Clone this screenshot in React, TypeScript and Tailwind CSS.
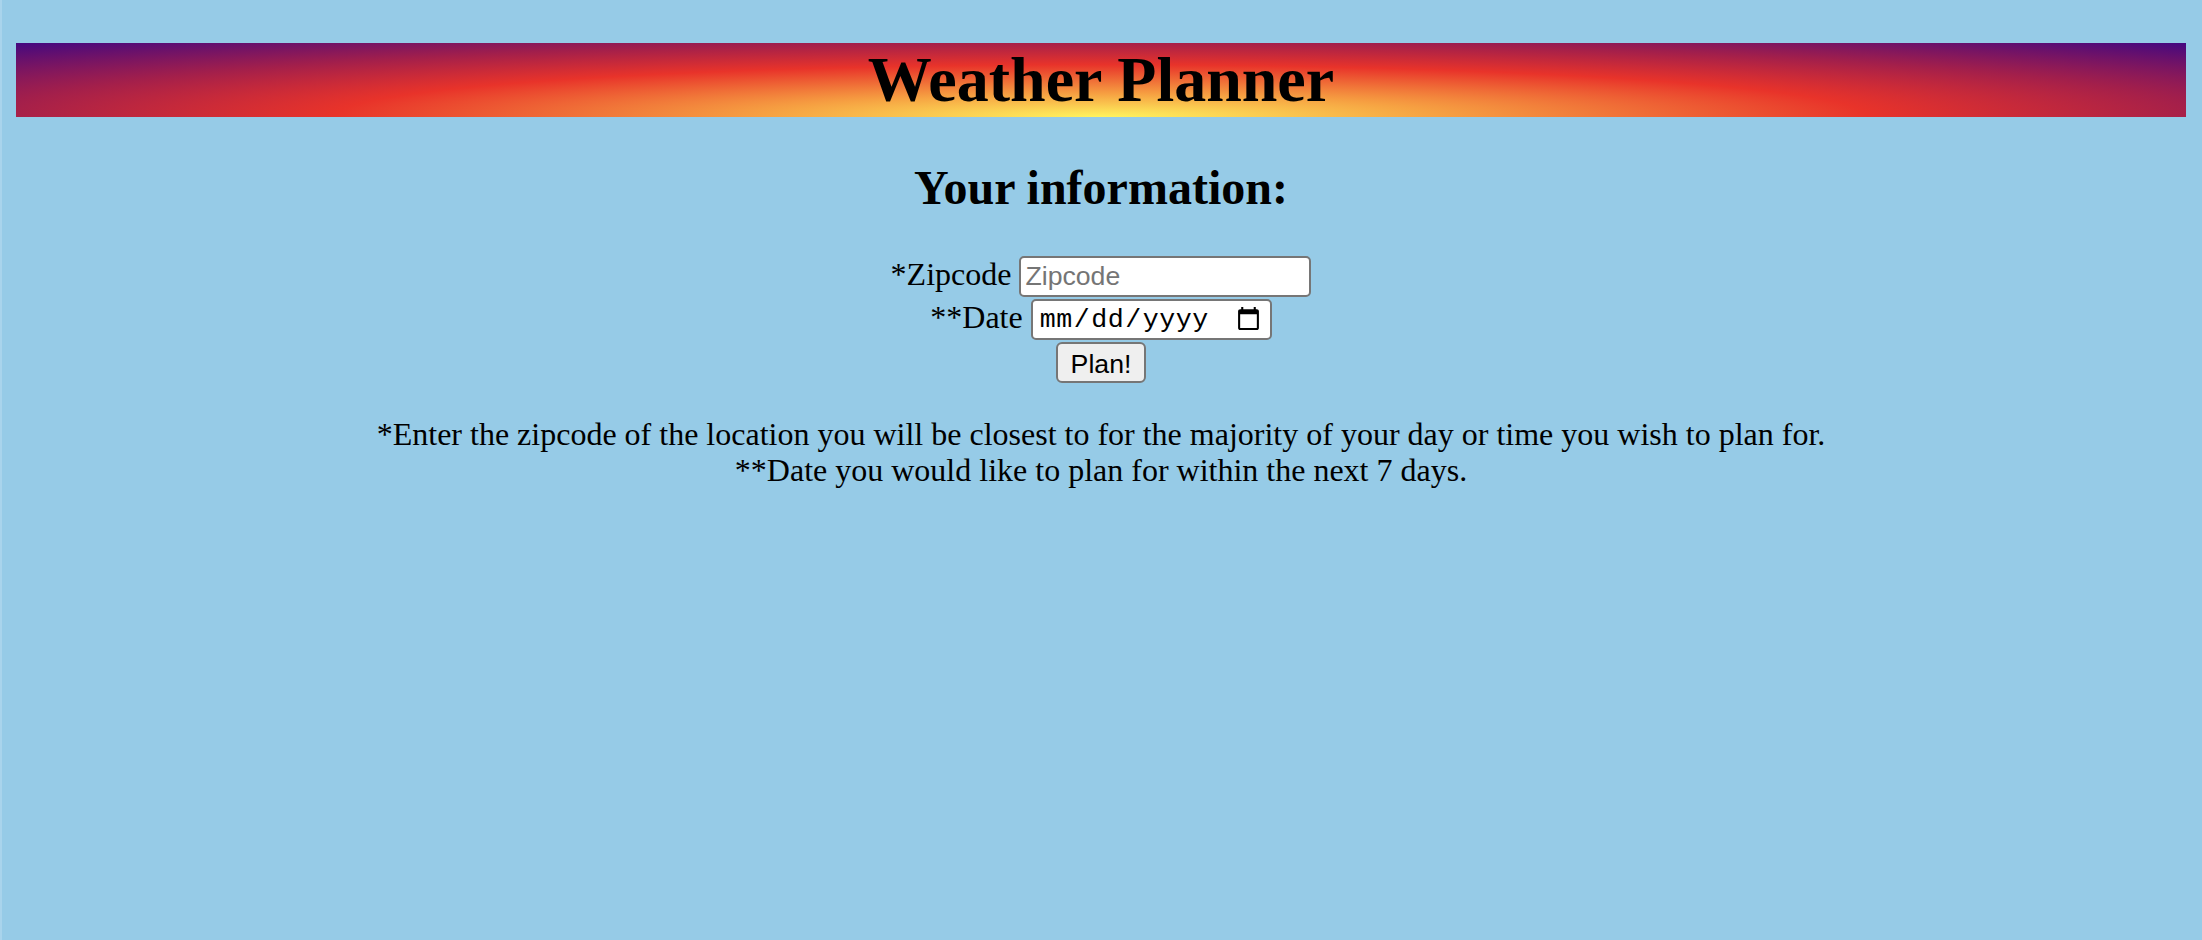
import type { FC } from "react";

const App: FC = () => {
  return (
    <div className="min-h-screen bg-[#96cbe7] border-l-2 border-[#a9d4ec] pl-[14px] pr-4 pt-[43px] font-['Liberation_Serif','Times_New_Roman',serif] text-black">
      <h1 className="text-center text-[64px] font-bold leading-[74px] bg-[radial-gradient(ellipse_at_bottom,#fff45e_0%,#f6a142_22%,#e8332a_50%,#a31f4b_72%,#440880_100%)]">
        Weather Planner
      </h1>

      <h2 className="mt-[43px] text-center text-[48px] font-bold leading-[55px]">
        Your information:
      </h2>

      <form
        className="mt-[41px] flex flex-col items-center gap-[2px]"
        onSubmit={(e) => e.preventDefault()}
      >
        <div className="flex h-[41px] items-center gap-2">
          <label htmlFor="zip" className="pb-[4px] text-[32px] leading-[37px]">
            *Zipcode
          </label>
          <input
            id="zip"
            type="text"
            placeholder="Zipcode"
            className="h-[41px] w-[292px] rounded-[5px] border-2 border-[#767676] bg-white px-[4px] font-['Liberation_Sans',Arial,sans-serif] text-[26.67px] placeholder:text-[#757575]"
          />
        </div>
        <div className="flex h-[41px] items-center gap-2">
          <label htmlFor="date" className="pb-[4px] text-[32px] leading-[37px]">
            **Date
          </label>
          <input
            id="date"
            type="date"
            className="h-[41px] w-[241px] rounded-[5px] border-2 border-[#767676] bg-white px-[6px] font-['Liberation_Mono','Courier_New',monospace] text-[26.67px] tracking-[0.5px]"
          />
        </div>
        <button
          type="submit"
          className="h-[41px] w-[90px] rounded-[6px] border-2 border-[#767676] bg-[#efefef] font-['Liberation_Sans',Arial,sans-serif] text-[26.67px]"
        >
          Plan!
        </button>
      </form>

      <div className="mt-[33px] text-center text-[32px] leading-[36px]">
        <p>
          *Enter the zipcode of the location you will be closest to for the
          majority of your day or time you wish to plan for.
        </p>
        <p>**Date you would like to plan for within the next 7 days.</p>
      </div>
    </div>
  );
};

export default App;
